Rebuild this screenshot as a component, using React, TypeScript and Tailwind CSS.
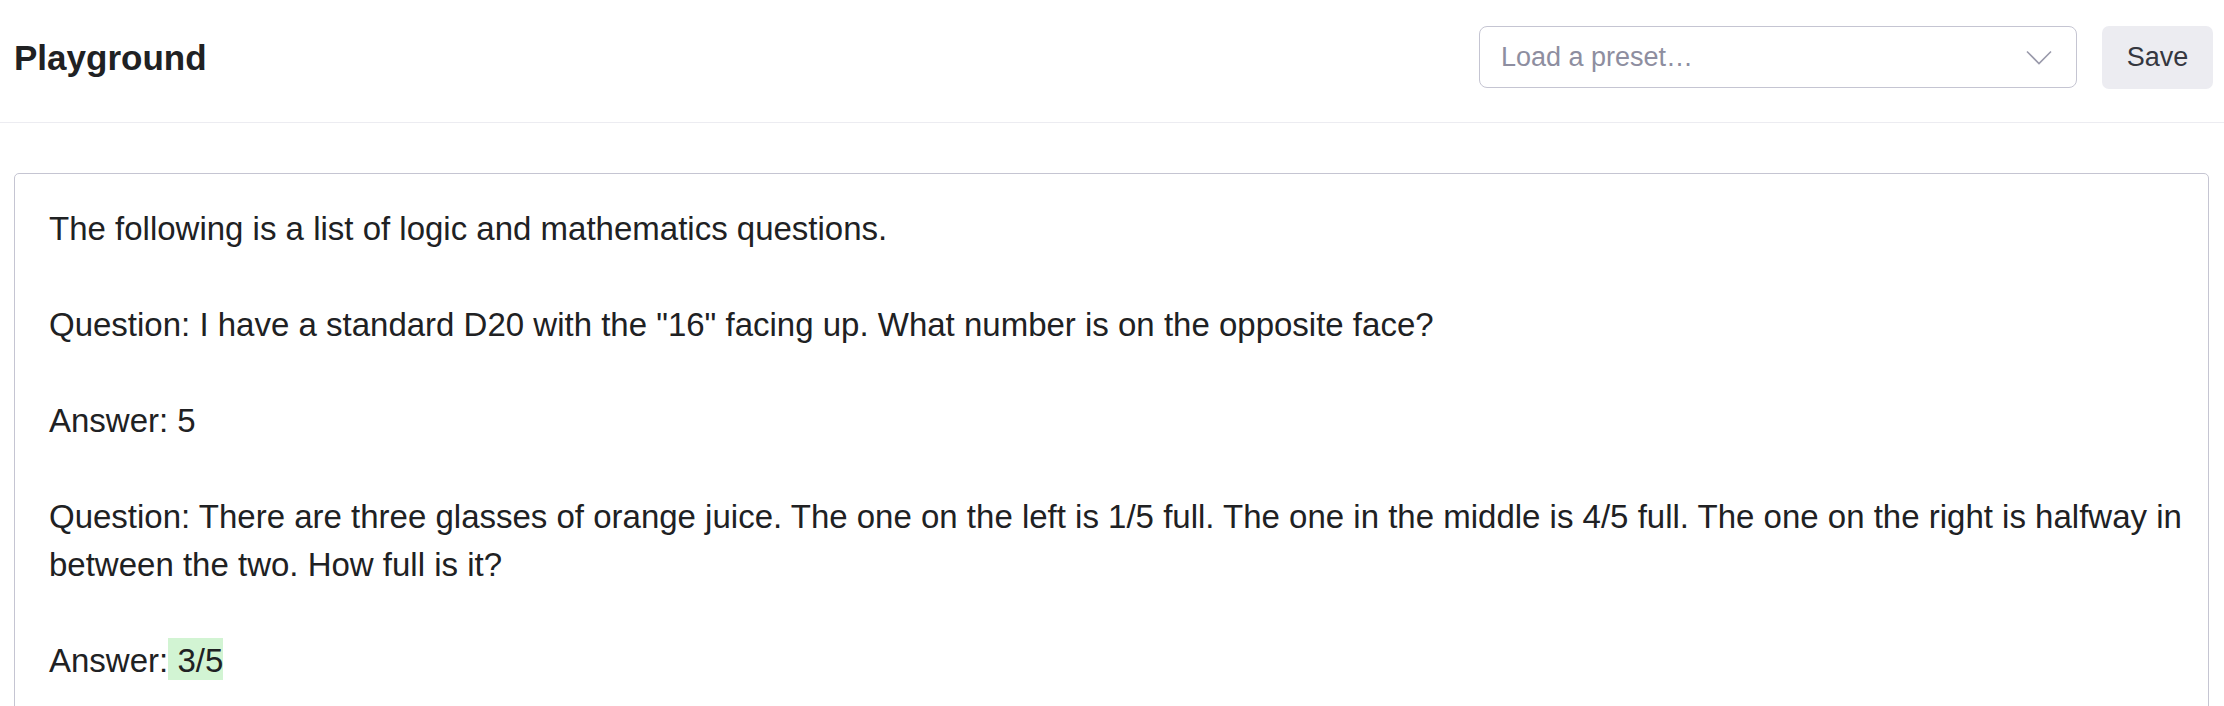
import React from "react";

const paragraphs = [
  "The following is a list of logic and mathematics questions.",
  'Question: I have a standard D20 with the "16" facing up. What number is on the opposite face?',
  "Answer: 5",
  "Question: There are three glasses of orange juice. The one on the left is 1/5 full. The one in the middle is 4/5 full. The one on the right is halfway in between the two. How full is it?",
];

export default function App() {
  return (
    <div className="h-[706px] w-full overflow-hidden bg-white font-['Liberation_Sans',Arial,sans-serif]">
      <header className="flex h-[123px] items-center justify-between border-b border-[#ececf1] pb-[8px] pl-[14px] pr-[11px]">
        <h1 className="text-[35px] font-bold leading-none text-[#202123]">Playground</h1>
        <div className="flex items-center gap-[25px]">
          <div className="flex h-[62px] w-[598px] items-center justify-between rounded-[8px] border border-[#c5c5d2] bg-white pl-[21px] pr-[24px]">
            <span className="text-[27px] leading-none text-[#8e8ea0]">Load a preset…</span>
            <svg width="26" height="15" viewBox="0 0 26 15" fill="none">
              <polyline points="1,1.5 13,13.5 25,1.5" stroke="#9a9aab" strokeWidth="1.6" />
            </svg>
          </div>
          <button className="flex h-[63px] w-[111px] items-center justify-center rounded-[7px] bg-[#ececf1] text-[27px] leading-none text-[#353740]">
            Save
          </button>
        </div>
      </header>
      <main className="pl-[14px] pr-[15px] pt-[50px]">
        <div className="flex min-h-[600px] flex-col gap-[48px] rounded-[5px] border border-[#c5c5d2] pl-[34px] pr-[18px] pt-[31px] text-[33px] leading-[48px] text-[#202123]">
          {paragraphs.map((p, i) => (
            <p key={i}>{p}</p>
          ))}
          <p className="whitespace-pre">
            <span>Answer:</span>
            <span className="bg-[#d2f4d3] pb-[1px] pt-[4px]"> 3/5</span>
          </p>
        </div>
      </main>
    </div>
  );
}
